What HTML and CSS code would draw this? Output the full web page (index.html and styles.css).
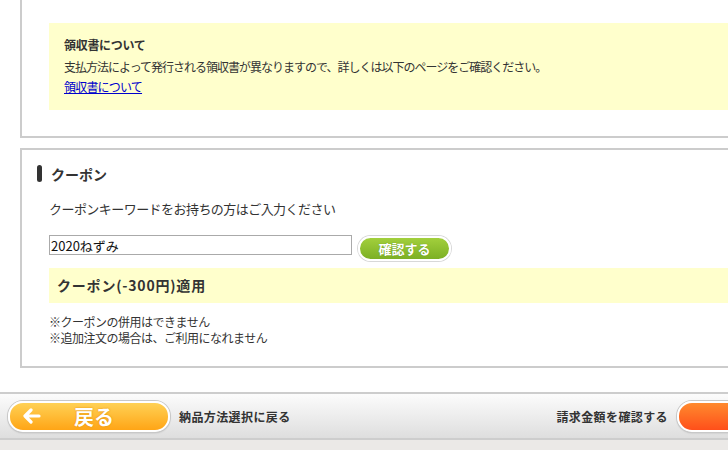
FILE: index.html
```html
<!DOCTYPE html>
<html lang="ja">
<head>
    <meta charset="UTF-8">
    <title>ご注文手続き - クーポン</title>
    <link rel="stylesheet" href="styles.css">
</head>
<body>
    <div class="page">
        <div class="section section-receipt">
            <div class="notice">
                <h3 class="notice-title">領収書について</h3>
                <p class="notice-text">支払方法によって発行される領収書が異なりますので、詳しくは以下のページをご確認ください。</p>
                <a href="#" class="notice-link">領収書について</a>
            </div>
        </div>

        <div class="section section-coupon">
            <h2 class="section-title">クーポン</h2>
            <p class="coupon-lead">クーポンキーワードをお持ちの方はご入力ください</p>
            <div class="coupon-form">
                <input type="text" class="coupon-input" value="2020ねずみ">
                <button type="button" class="btn-check">確認する</button>
            </div>
            <div class="coupon-result">クーポン(-300円)適用</div>
            <p class="coupon-notes">※クーポンの併用はできません<br>※追加注文の場合は、ご利用になれません</p>
        </div>
    </div>

    <div class="footer-bar">
        <div class="footer-left">
            <a href="#" class="btn-back">
                <svg class="back-arrow" width="18" height="16" viewBox="0 0 18 16">
                    <path d="M8 2 L2 8 L8 14 M2.5 8 H16" fill="none" stroke="#fff" stroke-width="3.2" stroke-linecap="round" stroke-linejoin="round"/>
                </svg>
                <span>戻る</span>
            </a>
            <span class="footer-label">納品方法選択に戻る</span>
        </div>
        <div class="footer-right">
            <span class="footer-label">請求金額を確認する</span>
            <a href="#" class="btn-next"></a>
        </div>
    </div>
</body>
</html>
```

FILE: styles.css
```css
html, body {
    margin: 0;
    padding: 0;
    overflow: hidden;
}
body {
    font-family: "Noto Sans CJK JP", "Liberation Sans", sans-serif;
    color: #333;
    background: #ebe9e7;
    width: 728px;
    height: 450px;
}
.page {
    background: #fff;
    width: 1000px;
    padding: 0 0 24px 20px;
}
.section {
    border: 2px solid #ccc;
    border-right: none;
    padding: 0 0 0 27px;
}
.section-receipt {
    border-top: none;
    padding-top: 23px;
    padding-bottom: 26px;
}
.notice {
    background: #ffffcc;
    padding: 12px 15px 13px;
    font-size: 12px;
    line-height: 20px;
}
.notice-title {
    margin: 0 0 2px;
    font-size: 12px;
    line-height: 20px;
    font-weight: bold;
    color: #333;
    letter-spacing: -0.3px;
}
.notice-text {
    margin: 0;
    letter-spacing: -1px;
}
.notice-link {
    color: #0000cc;
    letter-spacing: -0.8px;
}
.section-coupon {
    margin-top: 10px;
    padding-top: 14px;
    padding-bottom: 20px;
}
.section-title {
    margin: 0 0 0 -12px;
    font-size: 14px;
    font-weight: bold;
    line-height: 20px;
    display: flex;
    align-items: center;
    gap: 9px;
}
.section-title::before {
    content: "";
    width: 5px;
    height: 17px;
    margin-top: -1px;
    border-radius: 3px;
    background: #333;
}
.coupon-lead {
    margin: 15px 0 0;
    font-size: 13px;
    line-height: 20px;
    letter-spacing: -0.55px;
}
.coupon-form {
    margin-top: 16px;
    display: flex;
    align-items: flex-start;
    gap: 6px;
}
.coupon-input {
    width: 299px;
    height: 16px;
    margin: 0;
    padding: 1px;
    border: 1px solid #aaa;
    font-family: inherit;
    font-size: 13px;
    color: #111;
    outline: none;
}
.btn-check {
    width: 93px;
    height: 25px;
    margin-top: 1px;
    border: 2px solid #fff;
    border-radius: 13px;
    box-shadow: 0 0 0 1px #d8d8d8;
    background: linear-gradient(#a2cf3c, #7cb024);
    color: #fff;
    font-family: inherit;
    font-size: 13px;
    font-weight: bold;
    line-height: 19px;
    padding: 0;
    text-shadow: 0 0 1px #5a8a10;
}
.coupon-result {
    margin-top: 7px;
    height: 35px;
    line-height: 35px;
    padding-left: 8px;
    background: #ffffcc;
    font-size: 14px;
    font-weight: bold;
    letter-spacing: 0.8px;
}
.coupon-notes {
    margin: 11px 0 0;
    font-size: 12px;
    line-height: 16px;
    letter-spacing: -0.5px;
}
.footer-bar {
    height: 44px;
    border-top: 2px solid #cdcdcd;
    border-bottom: 2px solid #cdcdcd;
    background: linear-gradient(#fcfcfc, #dedede);
    display: flex;
    align-items: center;
    justify-content: space-between;
    font-size: 12px;
    font-weight: bold;
}
.footer-left, .footer-right {
    display: flex;
    align-items: center;
    gap: 9px;
}
.footer-left {
    padding-left: 8px;
}
.btn-back {
    width: 158px;
    height: 27px;
    border: 2px solid #fff;
    border-radius: 15px;
    box-shadow: 0 0 0 1px #c8c8c8, 0 1px 2px rgba(0, 0, 0, 0.2);
    background: linear-gradient(#ffd155, #ffa516);
    display: flex;
    align-items: center;
    text-decoration: none;
    color: #fff;
}
.back-arrow {
    margin-left: 13px;
}
.btn-back span {
    margin-left: 33px;
    font-size: 20px;
    font-weight: bold;
    text-shadow: 0 0 2px #e08a00;
}
.footer-label {
    color: #333;
    letter-spacing: 0.4px;
}
.btn-next {
    width: 120px;
    height: 27px;
    margin-right: -73px;
    border: 2px solid #fff;
    border-radius: 15px;
    box-shadow: 0 0 0 1px #c8c8c8, 0 1px 2px rgba(0, 0, 0, 0.2);
    background: linear-gradient(#ff8a2e, #ff4f1a);
}
```
